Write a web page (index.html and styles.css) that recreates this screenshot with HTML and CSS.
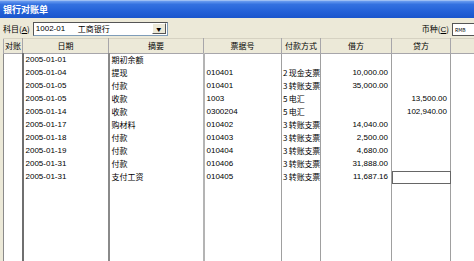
FILE: index.html
```html
<!DOCTYPE html>
<html lang="zh">
<head>
  <meta charset="UTF-8">
  <title>银行对账单</title>
  <link rel="stylesheet" href="styles.css">
</head>
<body>
  <div class="window">
    <div class="titlebar">银行对账单</div>

    <div class="toolbar">
      <span class="label">科目(<u>A</u>)</span>
      <div class="combo">
        <span class="code">1002-01</span>
        <span class="name">工商银行</span>
        <span class="drop">▼</span>
      </div>
      <div class="spacer"></div>
      <span class="label">币种(<u>C</u>)</span>
      <div class="currency">RMB</div>
    </div>

    <div class="grid">
      <table>
        <colgroup>
          <col class="c-check">
          <col class="c-date">
          <col class="c-memo">
          <col class="c-bill">
          <col class="c-pay">
          <col class="c-debit">
          <col class="c-credit">
          <col class="c-rest">
        </colgroup>
        <thead>
          <tr>
            <th>对账</th>
            <th>日期</th>
            <th>摘要</th>
            <th>票据号</th>
            <th>付款方式</th>
            <th>借方</th>
            <th>贷方</th>
            <th></th>
          </tr>
        </thead>
        <tbody>
          <tr><td></td><td>2005-01-01</td><td>期初余额</td><td></td><td></td><td class="num"></td><td class="num"></td><td></td></tr>
          <tr><td></td><td>2005-01-04</td><td>提现</td><td>010401</td><td>2 现金支票</td><td class="num">10,000.00</td><td class="num"></td><td></td></tr>
          <tr><td></td><td>2005-01-05</td><td>付款</td><td>010401</td><td>3 转账支票</td><td class="num">35,000.00</td><td class="num"></td><td></td></tr>
          <tr><td></td><td>2005-01-05</td><td>收款</td><td>1003</td><td>5 电汇</td><td class="num"></td><td class="num">13,500.00</td><td></td></tr>
          <tr><td></td><td>2005-01-14</td><td>收款</td><td>0300204</td><td>5 电汇</td><td class="num"></td><td class="num">102,940.00</td><td></td></tr>
          <tr><td></td><td>2005-01-17</td><td>购材料</td><td>010402</td><td>3 转账支票</td><td class="num">14,040.00</td><td class="num"></td><td></td></tr>
          <tr><td></td><td>2005-01-18</td><td>付款</td><td>010403</td><td>3 转账支票</td><td class="num">2,500.00</td><td class="num"></td><td></td></tr>
          <tr><td></td><td>2005-01-19</td><td>付款</td><td>010404</td><td>3 转账支票</td><td class="num">4,680.00</td><td class="num"></td><td></td></tr>
          <tr><td></td><td>2005-01-31</td><td>付款</td><td>010406</td><td>3 转账支票</td><td class="num">31,888.00</td><td class="num"></td><td></td></tr>
          <tr><td></td><td>2005-01-31</td><td>支付工资</td><td>010405</td><td>3 转账支票</td><td class="num">11,687.16</td><td class="num current"></td><td></td></tr>
          <tr class="filler"><td></td><td></td><td></td><td></td><td></td><td></td><td></td><td></td></tr>
        </tbody>
      </table>
    </div>
  </div>
</body>
</html>
```

FILE: styles.css
```css
* {
  box-sizing: border-box;
  margin: 0;
  padding: 0;
}

body {
  width: 474px;
  height: 261px;
  overflow: hidden;
  font-family: 'Liberation Sans', 'Noto Sans CJK SC', sans-serif;
  font-size: 8px;
  color: #000;
  background: #ece9d8;
}

.window {
  display: flex;
  flex-direction: column;
  height: 261px;
}

.titlebar {
  height: 18px;
  padding: 2px 3px 0;
  color: white;
  font-family: 'Noto Sans CJK SC', sans-serif;
  font-size: 9px;
  font-weight: bold;
  line-height: 14px;
  background: linear-gradient(180deg, #6a9cf0 0%, #3471e0 20%, #2461d8 60%, #1a55cc 100%);
  border-top: 1px solid #9dbef4;
}

.toolbar {
  display: flex;
  align-items: center;
  height: 20px;
  padding: 1px 0 0 3px;
  font-family: 'Noto Sans CJK SC', sans-serif;
}

.label {
  font-size: 8px;
  white-space: nowrap;
}

.label u {
  font-family: 'Liberation Sans', sans-serif;
}

.combo {
  display: flex;
  align-items: center;
  width: 135px;
  height: 14px;
  margin-left: 3px;
  background: white;
  border: 1px solid #7f9db9;
  border-top-color: #555;
  border-left-color: #555;
  padding-left: 2px;
}

.combo .code {
  width: 42px;
  font-family: 'Liberation Sans', sans-serif;
}

.combo .name {
  flex: 1;
  font-family: 'Noto Sans CJK SC', sans-serif;
}

.combo .drop {
  width: 14px;
  height: 11px;
  margin-right: 1px;
  background: #ece9d8;
  border: 1px solid #fff;
  border-right-color: #555;
  border-bottom-color: #555;
  font-size: 5px;
  line-height: 9px;
  text-align: center;
}

.spacer {
  flex: 1;
}

.currency {
  width: 22px;
  height: 13px;
  margin: 4px 0 0 3px;
  padding: 1px 2px;
  background: white;
  border: 1px solid #555;
  border-right: none;
  font-size: 5px;
  line-height: 10px;
  align-self: flex-start;
}

.grid {
  flex: 1;
  padding-left: 3px;
  overflow: hidden;
}

table {
  width: 480px;
  height: 100%;
  table-layout: fixed;
  border-collapse: collapse;
  background: white;
}

col.c-check { width: 19px; }
col.c-date { width: 86px; }
col.c-memo { width: 95px; }
col.c-bill { width: 78px; }
col.c-pay { width: 39px; }
col.c-debit { width: 71px; }
col.c-credit { width: 59px; }
col.c-rest { width: 33px; }

th {
  height: 15px;
  font-family: 'Noto Sans CJK SC', sans-serif;
  font-weight: normal;
  font-size: 8px;
  background: #ece9d8;
  border: 1px solid #a7a6aa;
  border-top-color: #d6d2c2;
  text-align: center;
  line-height: 12px;
}

th:first-child {
  text-align: left;
  padding-left: 1px;
}

td {
  height: 13px;
  padding: 0 2px;
  border-left: 1px solid #a0a0a0;
  border-right: 1px solid #a0a0a0;
  white-space: nowrap;
  overflow: hidden;
  line-height: 12px;
  vertical-align: middle;
}

td:nth-child(1) {
  border-left: 1px solid #8a8a8a;
  border-right: 2px solid #6f6f6f;
}

td:nth-child(2) {
  border-right: 2px solid #8a8a8a;
}

td:nth-child(3) {
  border-right: 2px solid #b4b4b4;
}

td:nth-child(3),
td:nth-child(5) {
  font-family: 'Noto Sans CJK SC', sans-serif;
}

td:nth-child(5) {
  padding-left: 1px;
  letter-spacing: -0.2px;
}

td.num {
  text-align: right;
  padding-right: 3px;
}

td.current {
  outline: 1px solid #666;
  outline-offset: -1px;
}

tr.filler td {
  height: auto;
}
```
